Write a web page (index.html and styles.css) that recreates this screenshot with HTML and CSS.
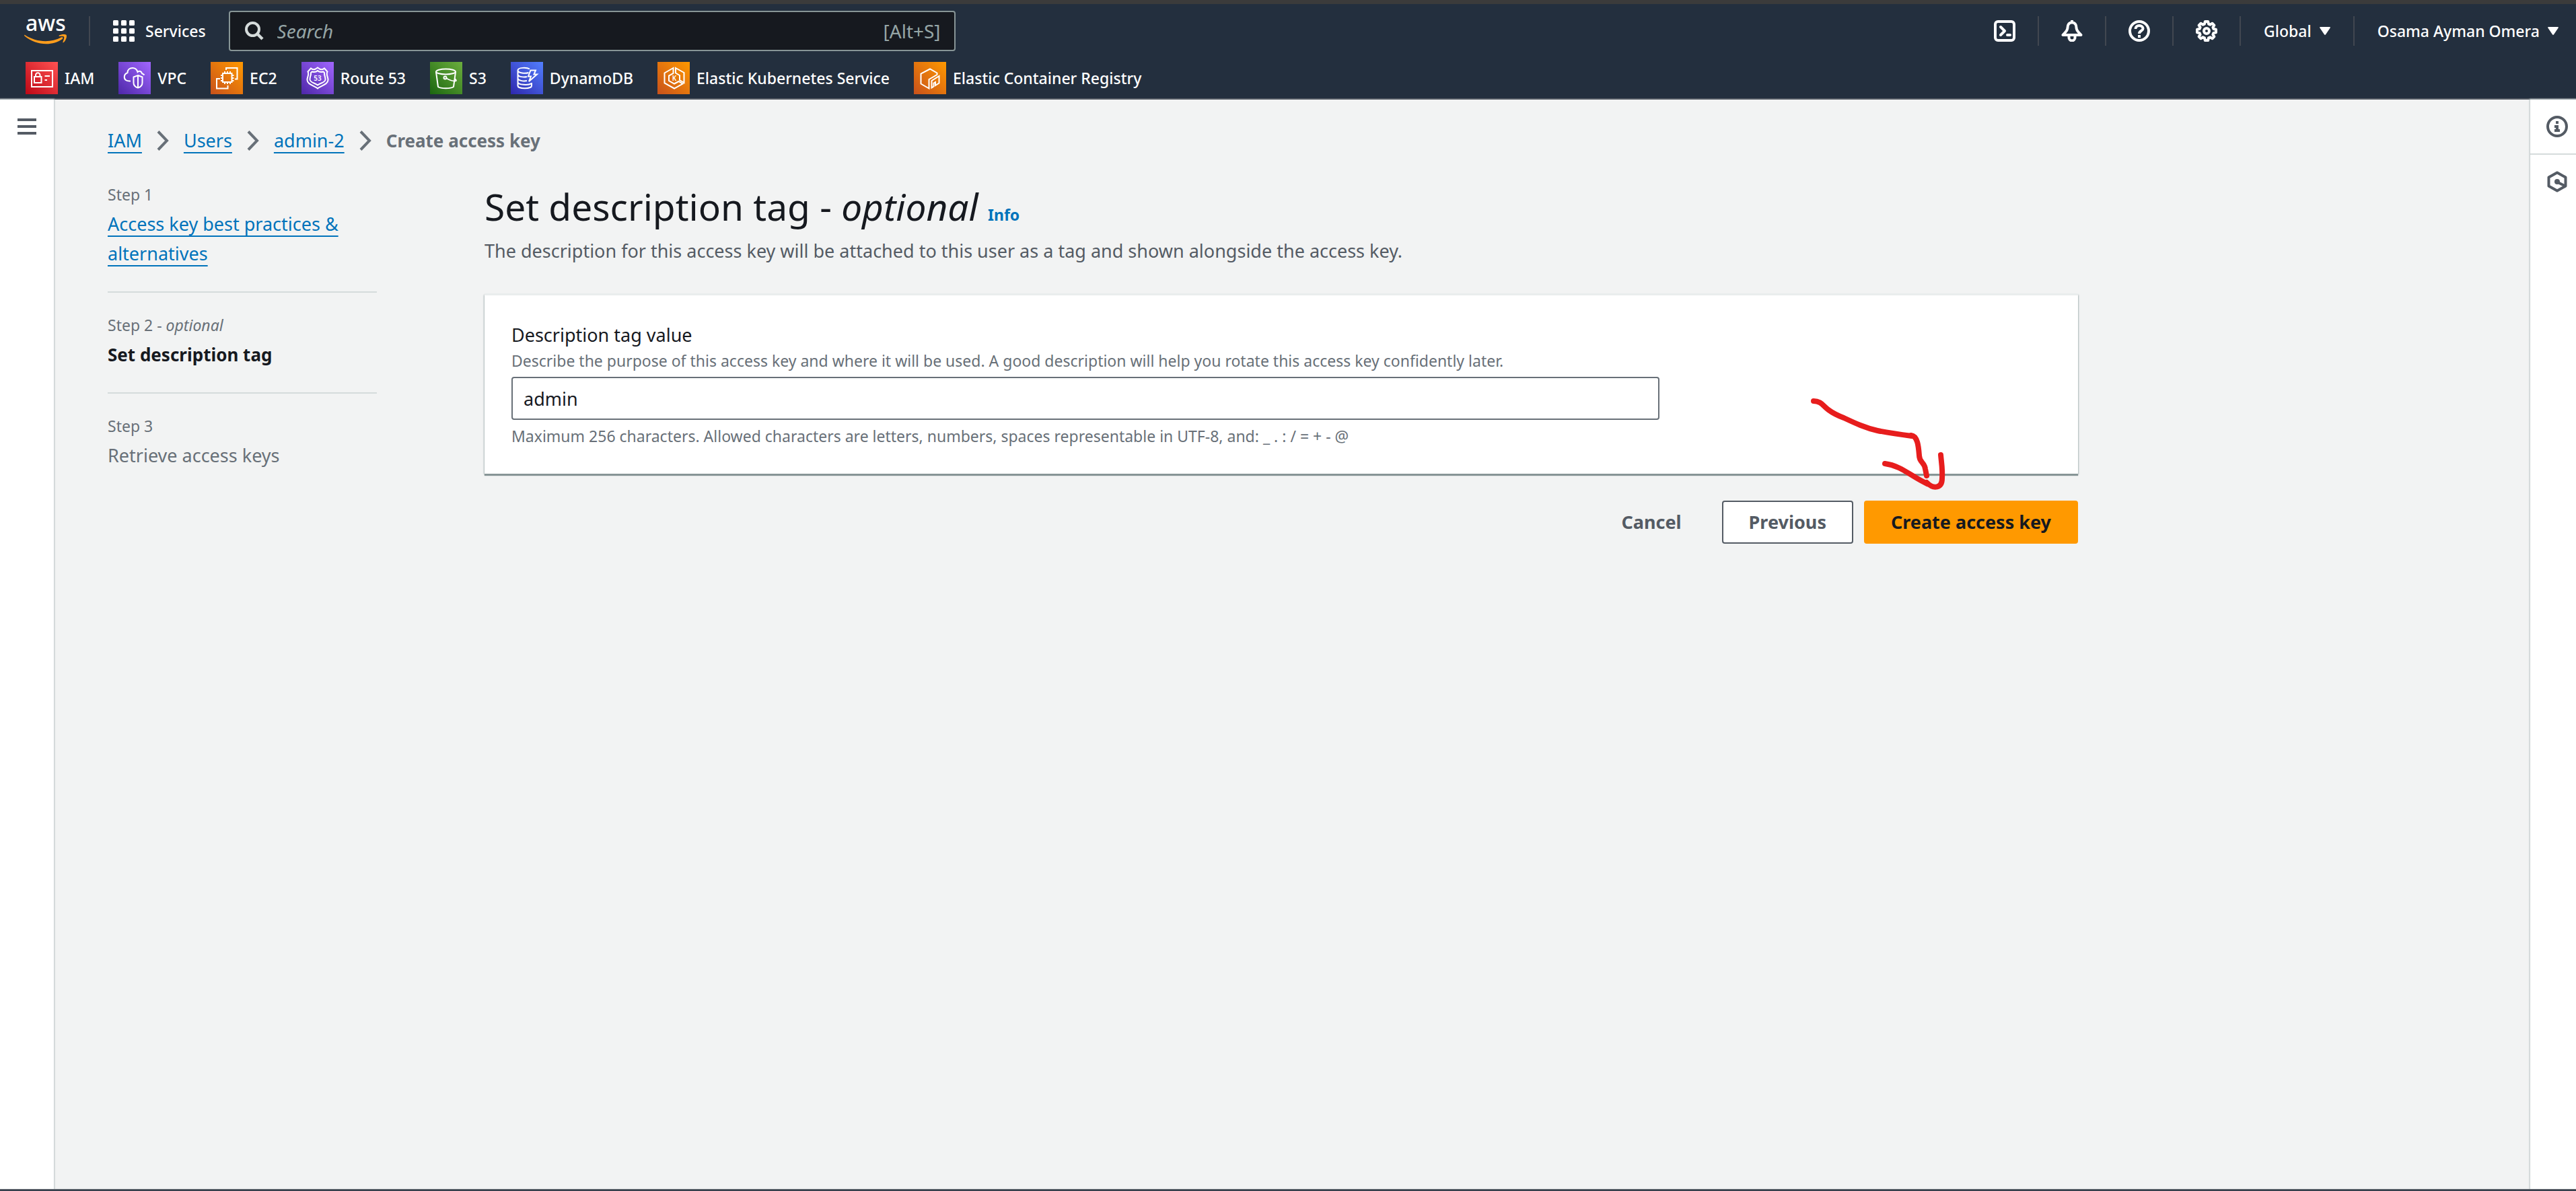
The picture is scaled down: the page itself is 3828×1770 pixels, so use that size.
FILE: index.html
```html
<!DOCTYPE html>
<html lang="en">
<head>
<meta charset="utf-8">
<title>Create access key | IAM | Global</title>
<link rel="stylesheet" href="styles.css">
</head>
<body>
<header class="header">
  <nav class="topnav" aria-label="Main">
    <a class="logo" href="#" aria-label="AWS home">
      <svg width="64" height="76" viewBox="0 -16 64 76">
        <text class="logo-word" x="2" y="22">aws</text>
        <path fill="#ff9d1c" d="M1 28C18 39 39 40 55 31.500C57 30.500 58.500 32.500 56.500 34C41 45.500 16 43 .6 29.500C-.3 28.600.2 27.500 1 28Z"/>
        <path fill="#ff9d1c" d="M52 28.500C55 26.500 61 26.500 62.500 27.700C64 29.500 62 36.500 58.500 39C57.500 39.700 57 39.200 57.500 38.200C58.500 35.500 59.800 32 59.200 30.800C58.500 29.500 55 29.800 52.500 30C51.300 30 51.200 29.200 52 28.500Z"/>
      </svg>
    </a>
    <span class="divider"></span>
    <button class="nav-button services" type="button">
      <svg width="32" height="32" viewBox="0 0 32 32" fill="#fff"><rect width="8" height="8" rx="1.500"/><rect x="12" width="8" height="8" rx="1.500"/><rect x="24" width="8" height="8" rx="1.500"/><rect y="12" width="8" height="8" rx="1.500"/><rect x="12" y="12" width="8" height="8" rx="1.500"/><rect x="24" y="12" width="8" height="8" rx="1.500"/><rect y="24" width="8" height="8" rx="1.500"/><rect x="12" y="24" width="8" height="8" rx="1.500"/><rect x="24" y="24" width="8" height="8" rx="1.500"/></svg>
      Services
    </button>
    <label class="search">
      <svg width="28" height="28" viewBox="0 0 28 28" fill="none" stroke="#d5dbdb"><circle cx="11.500" cy="11.500" r="9.500" stroke-width="4"/><path d="M18 18L26 26" stroke-width="4.500"/></svg>
      <input class="search-input" type="search" placeholder="Search" aria-label="Search">
      <span class="shortcut">[Alt+S]</span>
    </label>
    <div class="utilities">
      <button class="nav-button" type="button" aria-label="CloudShell">
        <svg width="32" height="32" viewBox="0 0 32 32" fill="none" stroke="#fff" stroke-width="4" stroke-linecap="round" stroke-linejoin="round"><rect x="2" y="2" width="28" height="28" rx="4"/><path d="M10 10L16 16L10 22M20 22H24"/></svg>
      </button>
      <span class="divider"></span>
      <button class="nav-button" type="button" aria-label="Notifications">
        <svg width="32" height="32" viewBox="0 0 32 32" fill="none" stroke="#fff" stroke-width="4" stroke-linejoin="round"><path d="M16 3.500C11.500 3.500 9.500 7 9.500 11C9.500 16 6 18 2.500 22H29.500C26 18 22.500 16 22.500 11C22.500 7 20.500 3.500 16 3.500ZM16 0V4"/><path d="M11.500 23V26A4.500 4.500 0 0 0 20.500 26V23"/></svg>
      </button>
      <span class="divider"></span>
      <button class="nav-button" type="button" aria-label="Help">
        <svg width="32" height="32" viewBox="0 0 32 32" fill="none" stroke="#fff" stroke-width="4"><circle cx="16" cy="16" r="14"/><path d="M10.500 13C10.500 9.500 13 8 16 8C19 8 21.500 9.800 21.500 12.500C21.500 16 16 15.500 16 20"/><path d="M16 22V26"/></svg>
      </button>
      <span class="divider"></span>
      <button class="nav-button" type="button" aria-label="Settings">
        <svg width="32" height="32" viewBox="0 0 32 32" fill="none" stroke="#fff" stroke-width="4" stroke-linejoin="round"><path d="M13.800 2H18.200L19 5.600L21.500 6.700L24.500 4.700L27.400 7.600L25.400 10.600L26.400 13L30 13.800V18.200L26.400 19L25.400 21.400L27.400 24.400L24.500 27.300L21.500 25.300L19 26.400L18.200 30H13.800L13 26.400L10.500 25.300L7.500 27.300L4.600 24.400L6.600 21.400L5.600 19L2 18.200V13.800L5.600 13L6.600 10.600L4.600 7.600L7.500 4.700L10.500 6.700L13 5.600Z"/><circle cx="16" cy="16" r="4"/></svg>
      </button>
      <span class="divider"></span>
      <button class="nav-button menu" type="button">Global <svg width="16" height="12" viewBox="0 0 16 12"><path fill="#fff" d="M1 0H15C16 0 16 1 15.500 1.800L9 11.200C8.300 12.200 7.700 12.200 7 11.200L.5 1.800C0 1 0 0 1 0Z"/></svg></button>
      <span class="divider"></span>
      <button class="nav-button menu" type="button">Osama Ayman Omera <svg width="16" height="12" viewBox="0 0 16 12"><path fill="#fff" d="M1 0H15C16 0 16 1 15.500 1.800L9 11.200C8.300 12.200 7.700 12.200 7 11.200L.5 1.800C0 1 0 0 1 0Z"/></svg></button>
    </div>
  </nav>
  <nav class="favorites" aria-label="Favorites">
    <a class="favorite" href="#">
      <svg class="tile tile-red" viewBox="0 0 48 48"><rect x="9" y="13" width="31" height="24"/><rect x="13" y="22" width="10.500" height="9"/><path d="M15 22V19.500A3 3 0 0 1 21.500 19.500V22M28.500 21H36M28.500 27H32"/></svg>
      IAM
    </a>
    <a class="favorite" href="#">
      <svg class="tile tile-purple" viewBox="0 0 48 48"><path d="M18 28.500C11.500 29 8.500 26 8.800 22C9 18.500 11 17 13.500 16C13.500 11.500 17 9 21 9C25 9 27.500 11.500 28.500 15C31 12.500 34.500 14 35 17.200C36.500 17.500 37.500 18.300 38.500 19.500"/><path d="M29 20L35.500 22.500V31C35.500 35.500 32.500 37.500 29 38.500C25.500 37.500 22.500 35.500 22.500 31V22.500ZM29 20V38.500"/></svg>
      VPC
    </a>
    <a class="favorite" href="#">
      <svg class="tile tile-orange" viewBox="0 0 48 48"><rect x="18" y="17" width="13.500" height="13"/><path d="M21 14V17M25 14V17M29 14V17M21 30V33M25 30V33M29 30V33M15 20H18M15 24H18M15 28H18M31.500 20H34.500M31.500 24H34.500M31.500 28H34.500M23 12V9H39.500V25.500H36M14 25H9V39.500H25.500V35"/></svg>
      EC2
    </a>
    <a class="favorite" href="#">
      <svg class="tile tile-purple" viewBox="0 0 48 48"><path d="M14 9.500C16 11.500 19 11.500 21 10.500L24 8.500L27 10.500C29 11.500 32 11.500 34 9.500L38.500 14.500C36 19 40 23 39.500 27C39 34 29 35 24 39.500C19 35 9 34 8.500 27C8 23 12 19 9.500 14.500Z"/><path d="M15.500 14.500C19 15.500 22 15 24 13C26 15 29 15.500 32.500 14.500L34 16C33.500 20 36 23 35.500 26.500C35 31 28 31 24 34.500C20 31 13 31 12.500 26.500C12 23 14.500 20 14 16Z"/><text class="tile-text" x="24" y="28" text-anchor="middle">53</text></svg>
      Route 53
    </a>
    <a class="favorite" href="#">
      <svg class="tile tile-green" viewBox="0 0 48 48"><ellipse cx="23.500" cy="14.500" rx="14.500" ry="4"/><path d="M9 15L12 37C16 40 31 40 35 37L38 15"/><circle cx="22.500" cy="23.500" r="2"/><path d="M24.500 24.500C29 27 34 28.500 37 28.500C39.500 28.500 39.500 27 36.500 25.200"/></svg>
      S3
    </a>
    <a class="favorite" href="#">
      <svg class="tile tile-blue" viewBox="0 0 48 48"><path d="M28 10.500C24 8 10.500 8 10.500 12.500V35.500C10.500 40.500 31 40.500 31 35.500V31M10.500 12.500C10.500 17 22 17.500 26.500 16M10.500 18.500C10.500 22.500 20 23 24 22M10.500 24C10.500 28 19 29 24 28M10.500 30C10.500 34.500 27 35 30 32"/><path d="M29.500 12.500H37L34.500 18.500H39L27 29L30 21.500H26Z"/></svg>
      DynamoDB
    </a>
    <a class="favorite" href="#">
      <svg class="tile tile-orange" viewBox="0 0 48 48"><path d="M23.500 9L10.500 16.500V31.500L25 39.500L37.500 32.500L31.500 29L25 32.500L17 28V20.500L23.500 17ZM27 9L39.500 16V31L33 27V20L27 16.500Z"/><text class="tile-text" x="25" y="28" text-anchor="middle">K</text></svg>
      Elastic Kubernetes Service
    </a>
    <a class="favorite" href="#">
      <svg class="tile tile-orange" viewBox="0 0 48 48"><path d="M22.500 39.500L10.500 32.500V17.500L24 10.500L34.500 16.500V19L22.500 26Z"/><path d="M26.500 38.500V28L37.500 21V31.500L32 35V30L29.500 31.500V36.500Z"/></svg>
      Elastic Container Registry
    </a>
  </nav>
</header>

<div class="shell">
  <aside class="rail rail-left">
    <button class="rail-button" type="button" aria-label="Open navigation">
      <svg width="28" height="24" viewBox="0 0 28 24" fill="#545b64"><path d="M0 0H28V4H0ZM0 10H28V14H0ZM0 20H28V24H0Z"/></svg>
    </button>
  </aside>
  <main class="main">
    <nav class="breadcrumbs" aria-label="Breadcrumbs">
      <a class="link" href="#">IAM</a>
      <svg class="chevron" viewBox="0 0 18 30"><path d="M2 1.500L15 15L2 28.500"/></svg>
      <a class="link" href="#">Users</a>
      <svg class="chevron" viewBox="0 0 18 30"><path d="M2 1.500L15 15L2 28.500"/></svg>
      <a class="link" href="#">admin-2</a>
      <svg class="chevron" viewBox="0 0 18 30"><path d="M2 1.500L15 15L2 28.500"/></svg>
      <span class="current">Create access key</span>
    </nav>
    <div class="wizard">
      <ol class="steps">
        <li class="step"><span class="step-label">Step 1</span><a class="link" href="#">Access key best practices &amp; alternatives</a></li>
        <li class="step step-active"><span class="step-label">Step 2 - <i>optional</i></span><span class="step-title">Set description tag</span></li>
        <li class="step"><span class="step-label">Step 3</span><span class="step-title">Retrieve access keys</span></li>
      </ol>
      <form class="content">
        <h1 class="title">Set description tag - <i>optional</i> <a class="info" href="#">Info</a></h1>
        <p class="lead">The description for this access key will be attached to this user as a tag and shown alongside the access key.</p>
        <section class="card">
          <div class="field">
            <label class="field-label" for="tag">Description tag value</label>
            <p class="hint" id="tag-hint">Describe the purpose of this access key and where it will be used. A good description will help you rotate this access key confidently later.</p>
            <input class="field-input" id="tag" type="text" value="admin" aria-describedby="tag-hint tag-rule">
            <p class="hint" id="tag-rule">Maximum 256 characters. Allowed characters are letters, numbers, spaces representable in UTF-8, and: _ . : / = + - @</p>
          </div>
          <svg class="arrow" width="220" height="150" viewBox="0 0 220 150">
            <path d="M15 13C26 13 29 20 37 26C45 32 52 35 60 38C77 46 92 53 110 57C125 60 138 62 161 65" stroke-width="8"/>
            <path d="M160 64C170 65 171 82 172 94C172 104 180 104 181 114L183 124" stroke-width="8"/>
            <path d="M121 106C145 109 160 125 184 136" stroke-width="8"/>
            <path d="M183 134C194 145 206 142 206 128C207 115 205 105 204 93" stroke-width="8"/>
          </svg>
        </section>
        <div class="actions">
          <button class="button button-link" type="button">Cancel</button>
          <button class="button button-normal" type="button">Previous</button>
          <button class="button button-primary" type="submit">Create access key</button>
        </div>
      </form>
    </div>
  </main>
  <aside class="rail rail-right">
    <button class="rail-button" type="button" aria-label="Info">
      <svg width="32" height="32" viewBox="0 0 32 32"><circle cx="16" cy="16" r="14" fill="none" stroke="#545b64" stroke-width="4"/><path fill="#545b64" d="M14 8H18V12H14ZM12 14H18V20H20V24H12V20H14V18H12Z"/></svg>
    </button>
    <button class="rail-button" type="button" aria-label="Diagnostics">
      <svg width="32" height="32" viewBox="0 0 32 32"><path fill="none" stroke="#545b64" stroke-width="4" stroke-linejoin="round" d="M16 2.500L28.500 9.500V22.500L16 29.500L3.500 22.500V9.500Z"/><circle cx="16" cy="16" r="4" fill="#545b64"/><path d="M17 17L27 22" stroke="#545b64" stroke-width="4"/></svg>
    </button>
  </aside>
</div>
<footer class="footer"></footer>
</body>
</html>
```
FILE: styles.css
```css
* { box-sizing: border-box; }

body {
  margin: 0;
  min-height: 100vh;
  display: flex;
  flex-direction: column;
  background: #f2f3f3;
  color: #16191f;
  font-family: "Noto Sans", "Open Sans", sans-serif;
  font-size: 27px;
  line-height: 44px;
}

button, input { font: inherit; color: inherit; }
button { background: none; border: 0; padding: 0; cursor: pointer; }
h1, p, ol { margin: 0; padding: 0; font-weight: 400; }
svg { display: block; flex: none; }

/* Header */
.header {
  background: #232f3e;
  border-top: 6px solid #3b3b3b;
  border-bottom: 2px solid #545b64;
  color: #fff;
  font-size: 23px;
  font-weight: 500;
}

.topnav {
  display: flex;
  align-items: center;
  height: 80px;
  padding: 0 26px 0 36px;
}

.logo-word { font-size: 32px; font-weight: 500; fill: #fff; }
.divider { width: 2px; height: 44px; background: #414750; }
.logo + .divider { margin-left: 32px; }

.nav-button {
  display: flex;
  align-items: center;
  gap: 12px;
  padding: 0 33px;
  line-height: 32px;
  font-weight: 500;
  white-space: nowrap;
}
.services { gap: 16px; padding: 0 34px; }
.menu { padding: 0 34px; }
.menu:last-child { padding-right: 0; }

.search {
  display: flex;
  align-items: center;
  gap: 20px;
  flex: 0 1 1080px;
  height: 60px;
  padding: 0 20px 0 22px;
  background: #16191f;
  border: 2px solid #879596;
  border-radius: 4px;
  color: #95a5a6;
  font-size: 28px;
  font-weight: 400;
}
.search-input {
  flex: 1;
  min-width: 0;
  padding: 0;
  border: 0;
  outline: 0;
  background: none;
}
.search-input::placeholder { color: #95a5a6; font-style: italic; opacity: 1; }

.utilities { display: flex; align-items: center; margin-left: auto; }

.favorites { display: flex; gap: 36px; padding: 6px 38px; }
.favorite {
  display: flex;
  align-items: center;
  gap: 10px;
  color: #fff;
  text-decoration: none;
  white-space: nowrap;
}
.tile { width: 48px; height: 48px; fill: none; stroke: #fff; stroke-width: 2; }
.tile-text { font-size: 10px; font-weight: 600; fill: #fff; stroke: none; }
.tile-red { background: linear-gradient(45deg, #bd0816, #ff5252); }
.tile-purple { background: linear-gradient(45deg, #4d27a8, #a166ff); }
.tile-orange { background: linear-gradient(45deg, #c8511b, #ff9900); }
.tile-green { background: linear-gradient(45deg, #1b660f, #6cae3e); }
.tile-blue { background: linear-gradient(45deg, #2e27ad, #527fff); }

/* Page frame */
.shell { display: flex; flex: 1; }
.rail { background: #fff; box-shadow: 0 0 2px 1px #b8c2c4; }
.rail-left { width: 80px; }
.rail-right { width: 68px; }
.rail-button {
  display: flex;
  align-items: center;
  justify-content: center;
  width: 100%;
  height: 80px;
}
.rail-right .rail-button { padding-left: 12px; }
.rail-right .rail-button + .rail-button { height: 82px; border-top: 2px solid #d5dbdb; }

.main { flex: 1; min-width: 0; padding: 39px 80px; }

.link {
  color: #0073bb;
  text-decoration: underline 2px;
  text-underline-offset: 7px;
  text-decoration-skip-ink: none;
}

.breadcrumbs { display: flex; align-items: center; gap: 22px; margin-bottom: 36px; }
.chevron { width: 18px; height: 30px; fill: none; stroke: #687078; stroke-width: 4; }
.current { color: #687078; font-size: 26px; font-weight: 700; }

.wizard {
  display: grid;
  grid-template-columns: 400px minmax(0, 2368px);
  gap: 160px;
}

/* Steps */
.steps { list-style: none; }
.step { padding-bottom: 34px; color: #687078; }
.step + .step { padding-top: 26px; border-top: 2px solid #d5dbdb; }
.step-label { display: block; font-size: 23px; }
.step-title { display: block; }
.step-active .step-title { color: #16191f; font-size: 26px; font-weight: 700; }

/* Form */
.title { font-size: 55px; line-height: 80px; }
.info { color: #0073bb; font-size: 23px; line-height: 32px; font-weight: 700; text-decoration: none; }
.lead { margin: 4px 0 42px; color: #545b64; }

.card {
  position: relative;
  display: grid;
  grid-template-columns: repeat(4, minmax(0, 1fr));
  column-gap: 40px;
  padding: 37px 40px 40px;
  background: #fff;
  border-top: 2px solid #eaeded;
  box-shadow: 0 3px 1px #879596, 1px 1px 2px #b8c2c4, -1px 1px 2px #b8c2c4;
}
.field { grid-column: span 3; }
.field-label { display: block; }
.hint { color: #687078; font-size: 23px; line-height: 32px; }
.field-input {
  display: block;
  width: 100%;
  height: 64px;
  margin: 8px 0;
  padding: 0 16px;
  background: #fff;
  border: 2px solid #687078;
  border-radius: 4px;
}

/* Hand-drawn pointer lying over the card and the actions */
.arrow {
  position: absolute;
  z-index: 1;
  top: 144px;
  right: 188px;
  fill: none;
  stroke: #e71d1d;
  stroke-linecap: round;
  stroke-linejoin: round;
  pointer-events: none;
}

.actions { display: flex; justify-content: flex-end; gap: 16px; margin-top: 40px; }
.button {
  height: 64px;
  padding: 0 38px;
  border: 2px solid transparent;
  border-radius: 4px;
  font-weight: 700;
  color: #545b64;
}
.button-link { padding: 0 42px; }
.button-normal { background: #fff; border-color: #545b64; }
.button-primary { background: #ff9900; color: #16191f; }

.footer { height: 3px; background: #232f3e; border-top: 2px solid #545b64; }
```
